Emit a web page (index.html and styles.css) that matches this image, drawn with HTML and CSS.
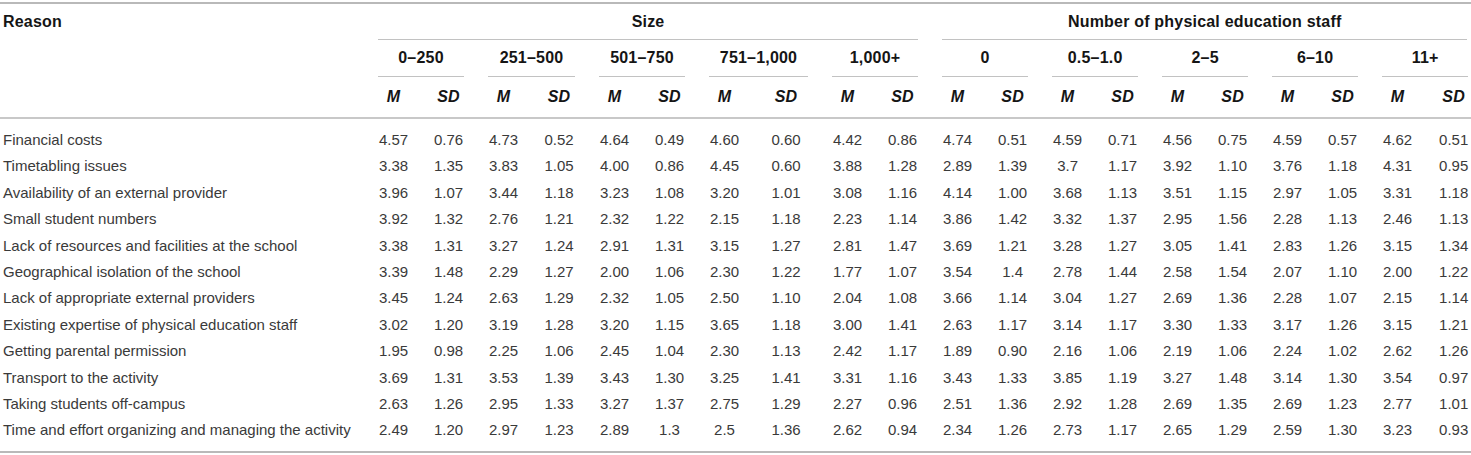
FILE: index.html
```html
<!DOCTYPE html>
<html lang="en">
<head>
    <meta charset="UTF-8">
    <meta name="viewport" content="width=device-width, initial-scale=1.0">
    <link rel="stylesheet" href="styles.css">
</head>
<body>
    <table class="stats">
        <colgroup>
            <col class="col-reason">
            <col class="col-m"><col class="col-m">
            <col class="col-m"><col class="col-wide1">
            <col class="col-m"><col class="col-m">
            <col class="col-m"><col class="col-wide2">
            <col class="col-m"><col class="col-m">
            <col class="col-m"><col class="col-m">
            <col class="col-m"><col class="col-m">
            <col class="col-m"><col class="col-m">
            <col class="col-m"><col class="col-m">
            <col class="col-m"><col class="col-end">
        </colgroup>
        <thead>
            <tr>
                <th rowspan="3" class="reason">Reason</th>
                <th colspan="10"><div class="group-title">Size</div></th>
                <th colspan="10"><div class="group-title group-title-end">Number of physical education staff</div></th>
            </tr>
            <tr>
                <th colspan="2"><div class="range-title">0–250</div></th>
                <th colspan="2"><div class="range-title">251–500</div></th>
                <th colspan="2"><div class="range-title">501–750</div></th>
                <th colspan="2"><div class="range-title">751–1,000</div></th>
                <th colspan="2"><div class="range-title">1,000+</div></th>
                <th colspan="2"><div class="range-title">0</div></th>
                <th colspan="2"><div class="range-title">0.5–1.0</div></th>
                <th colspan="2"><div class="range-title">2–5</div></th>
                <th colspan="2"><div class="range-title">6–10</div></th>
                <th colspan="2"><div class="range-title range-title-end">11+</div></th>
            </tr>
            <tr class="stat-head">
                <th>M</th><th>SD</th>
                <th>M</th><th>SD</th>
                <th>M</th><th>SD</th>
                <th>M</th><th>SD</th>
                <th>M</th><th>SD</th>
                <th>M</th><th>SD</th>
                <th>M</th><th>SD</th>
                <th>M</th><th>SD</th>
                <th>M</th><th>SD</th>
                <th>M</th><th class="last">SD</th>
            </tr>
        </thead>
        <tbody>
            <tr>
                <td class="label">Financial costs</td>
                <td>4.57</td><td>0.76</td><td>4.73</td><td>0.52</td><td>4.64</td><td>0.49</td><td>4.60</td><td>0.60</td><td>4.42</td><td>0.86</td>
                <td>4.74</td><td>0.51</td><td>4.59</td><td>0.71</td><td>4.56</td><td>0.75</td><td>4.59</td><td>0.57</td><td>4.62</td><td class="last">0.51</td>
            </tr>
            <tr>
                <td class="label">Timetabling issues</td>
                <td>3.38</td><td>1.35</td><td>3.83</td><td>1.05</td><td>4.00</td><td>0.86</td><td>4.45</td><td>0.60</td><td>3.88</td><td>1.28</td>
                <td>2.89</td><td>1.39</td><td>3.7</td><td>1.17</td><td>3.92</td><td>1.10</td><td>3.76</td><td>1.18</td><td>4.31</td><td class="last">0.95</td>
            </tr>
            <tr>
                <td class="label">Availability of an external provider</td>
                <td>3.96</td><td>1.07</td><td>3.44</td><td>1.18</td><td>3.23</td><td>1.08</td><td>3.20</td><td>1.01</td><td>3.08</td><td>1.16</td>
                <td>4.14</td><td>1.00</td><td>3.68</td><td>1.13</td><td>3.51</td><td>1.15</td><td>2.97</td><td>1.05</td><td>3.31</td><td class="last">1.18</td>
            </tr>
            <tr>
                <td class="label">Small student numbers</td>
                <td>3.92</td><td>1.32</td><td>2.76</td><td>1.21</td><td>2.32</td><td>1.22</td><td>2.15</td><td>1.18</td><td>2.23</td><td>1.14</td>
                <td>3.86</td><td>1.42</td><td>3.32</td><td>1.37</td><td>2.95</td><td>1.56</td><td>2.28</td><td>1.13</td><td>2.46</td><td class="last">1.13</td>
            </tr>
            <tr>
                <td class="label">Lack of resources and facilities at the school</td>
                <td>3.38</td><td>1.31</td><td>3.27</td><td>1.24</td><td>2.91</td><td>1.31</td><td>3.15</td><td>1.27</td><td>2.81</td><td>1.47</td>
                <td>3.69</td><td>1.21</td><td>3.28</td><td>1.27</td><td>3.05</td><td>1.41</td><td>2.83</td><td>1.26</td><td>3.15</td><td class="last">1.34</td>
            </tr>
            <tr>
                <td class="label">Geographical isolation of the school</td>
                <td>3.39</td><td>1.48</td><td>2.29</td><td>1.27</td><td>2.00</td><td>1.06</td><td>2.30</td><td>1.22</td><td>1.77</td><td>1.07</td>
                <td>3.54</td><td>1.4</td><td>2.78</td><td>1.44</td><td>2.58</td><td>1.54</td><td>2.07</td><td>1.10</td><td>2.00</td><td class="last">1.22</td>
            </tr>
            <tr>
                <td class="label">Lack of appropriate external providers</td>
                <td>3.45</td><td>1.24</td><td>2.63</td><td>1.29</td><td>2.32</td><td>1.05</td><td>2.50</td><td>1.10</td><td>2.04</td><td>1.08</td>
                <td>3.66</td><td>1.14</td><td>3.04</td><td>1.27</td><td>2.69</td><td>1.36</td><td>2.28</td><td>1.07</td><td>2.15</td><td class="last">1.14</td>
            </tr>
            <tr>
                <td class="label">Existing expertise of physical education staff</td>
                <td>3.02</td><td>1.20</td><td>3.19</td><td>1.28</td><td>3.20</td><td>1.15</td><td>3.65</td><td>1.18</td><td>3.00</td><td>1.41</td>
                <td>2.63</td><td>1.17</td><td>3.14</td><td>1.17</td><td>3.30</td><td>1.33</td><td>3.17</td><td>1.26</td><td>3.15</td><td class="last">1.21</td>
            </tr>
            <tr>
                <td class="label">Getting parental permission</td>
                <td>1.95</td><td>0.98</td><td>2.25</td><td>1.06</td><td>2.45</td><td>1.04</td><td>2.30</td><td>1.13</td><td>2.42</td><td>1.17</td>
                <td>1.89</td><td>0.90</td><td>2.16</td><td>1.06</td><td>2.19</td><td>1.06</td><td>2.24</td><td>1.02</td><td>2.62</td><td class="last">1.26</td>
            </tr>
            <tr>
                <td class="label">Transport to the activity</td>
                <td>3.69</td><td>1.31</td><td>3.53</td><td>1.39</td><td>3.43</td><td>1.30</td><td>3.25</td><td>1.41</td><td>3.31</td><td>1.16</td>
                <td>3.43</td><td>1.33</td><td>3.85</td><td>1.19</td><td>3.27</td><td>1.48</td><td>3.14</td><td>1.30</td><td>3.54</td><td class="last">0.97</td>
            </tr>
            <tr>
                <td class="label">Taking students off-campus</td>
                <td>2.63</td><td>1.26</td><td>2.95</td><td>1.33</td><td>3.27</td><td>1.37</td><td>2.75</td><td>1.29</td><td>2.27</td><td>0.96</td>
                <td>2.51</td><td>1.36</td><td>2.92</td><td>1.28</td><td>2.69</td><td>1.35</td><td>2.69</td><td>1.23</td><td>2.77</td><td class="last">1.01</td>
            </tr>
            <tr>
                <td class="label">Time and effort organizing and managing the activity</td>
                <td>2.49</td><td>1.20</td><td>2.97</td><td>1.23</td><td>2.89</td><td>1.3</td><td>2.5</td><td>1.36</td><td>2.62</td><td>0.94</td>
                <td>2.34</td><td>1.26</td><td>2.73</td><td>1.17</td><td>2.65</td><td>1.29</td><td>2.59</td><td>1.30</td><td>3.23</td><td class="last">0.93</td>
            </tr>
        </tbody>
    </table>
</body>
</html>
```

FILE: styles.css
```css
:root {
    --rule: #b9b9b9;
    --rule-light: #c8c8c8;
    --line: #c2c2c2;
    --head: #151515;
    --text: #3a3a3a;
}

body {
    margin: 0;
    font-family: "Liberation Sans", Arial, sans-serif;
    font-size: 15px;
    color: var(--text);
    background: #ffffff;
}

.stats {
    width: 1471px;
    table-layout: fixed;
    border-collapse: collapse;
    border-spacing: 0;
    margin-top: 2px;
    border-top: 2px solid var(--rule);
    border-bottom: 2px solid var(--rule);
}

.col-reason { width: 366px; }
.col-m { width: 55px; }
.col-wide1 { width: 56px; }
.col-wide2 { width: 68px; }
.col-end { width: 46px; }

.stats thead {
    border-bottom: 2px solid var(--rule-light);
}

.stats th {
    padding: 0;
    font-size: 16px;
    font-weight: bold;
    letter-spacing: 0.2px;
    color: var(--head);
    text-align: center;
    line-height: 18px;
    white-space: nowrap;
}

.stats th.reason {
    text-align: left;
    vertical-align: top;
    padding: 9px 0 0 3px;
}

.group-title {
    margin: 0 12px;
    padding: 9px 0 8px;
    border-bottom: 1px solid var(--line);
}

.group-title-end {
    margin-right: 4px;
}

.range-title {
    margin: 0 12px;
    padding: 9px 0;
    border-bottom: 1px solid var(--line);
}

.range-title-end {
    margin-right: 3px;
}

.stat-head th {
    font-style: italic;
    padding: 11px 0;
}

.stats td {
    padding: 0;
    text-align: center;
    line-height: 26.4px;
    white-space: nowrap;
}

.stats td.label {
    text-align: left;
    padding-left: 3px;
}

.stats tbody tr:first-child td {
    padding-top: 8px;
}

.stats tbody tr:last-child td {
    padding-bottom: 7px;
}

.stats .last {
    padding-left: 11px;
}
```
